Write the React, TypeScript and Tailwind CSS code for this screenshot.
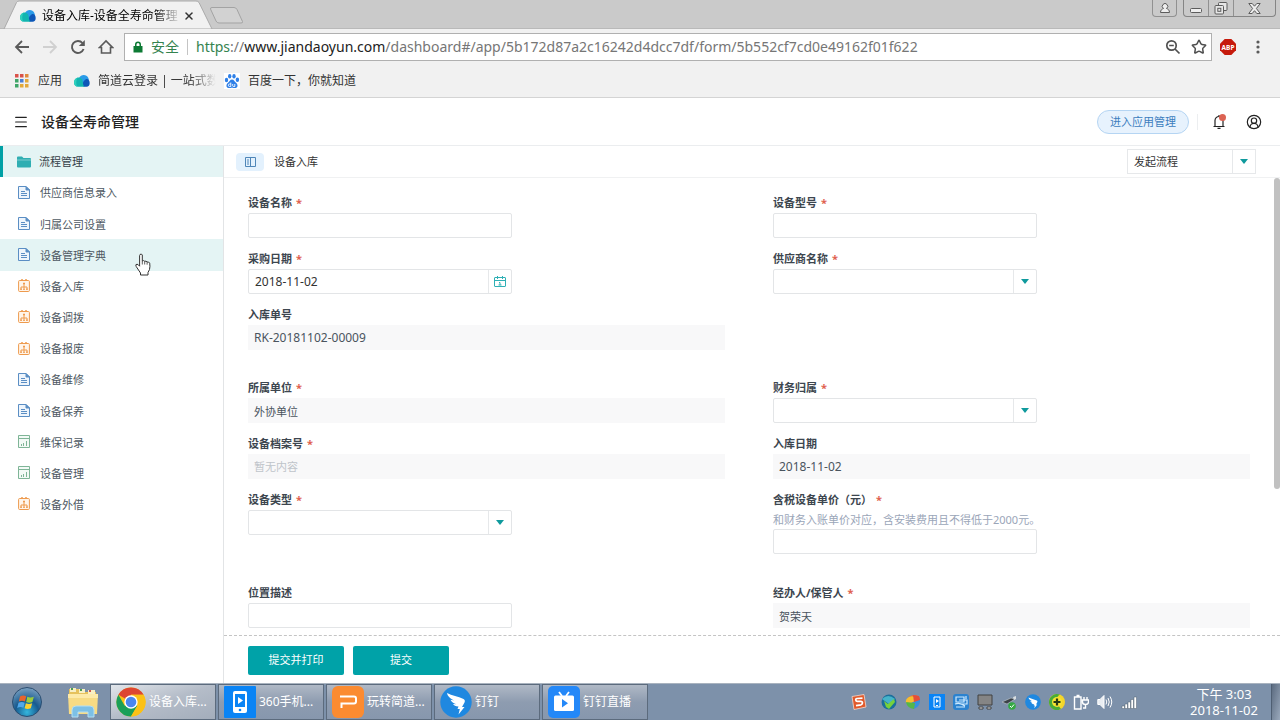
import { useId, type ReactNode } from "react";
import clsx from "clsx";
import { CircleUserRound, Menu, Star, X } from "lucide-react";

type MenuKind = "form" | "flow" | "report";

const menuItems: { name: string; kind: MenuKind; hovered?: boolean }[] = [
  { name: "供应商信息录入", kind: "form" },
  { name: "归属公司设置", kind: "form" },
  { name: "设备管理字典", kind: "form", hovered: true },
  { name: "设备入库", kind: "flow" },
  { name: "设备调拨", kind: "flow" },
  { name: "设备报废", kind: "flow" },
  { name: "设备维修", kind: "form" },
  { name: "设备保养", kind: "form" },
  { name: "维保记录", kind: "report" },
  { name: "设备管理", kind: "report" },
  { name: "设备外借", kind: "flow" },
];

function CloudLogo() {
  return (
    <svg viewBox="0 0 16 12" className="h-3 w-4 shrink-0">
      <path d="M5 3C6 1 8 0 10 .1c2.800.2 4.700 2.200 4.800 4.900L10 11.500 5 8Z" fill="#2a9be8" />
      <path d="M9.500 11.800C8 9 9 6 11.500 4.500c1.200-.6 2.200-.6 3.300.5 1.800 2.800.8 6.800-2.300 6.800Z" fill="#0d57b8" />
      <path
        d="M4 11.800C1.500 11.800 0 10 0 7.500 0 5 1.600 3.200 3.800 2.600 6 2 8 3.500 8.500 5.500c.5 2.300.2 4.500 2 6.300Z"
        fill="#12b5b0"
      />
      <path d="M3 11.600C1 11 0 9.500 0 7.500 0 5 1.600 3.200 3.800 2.600 1.800 5 2 9 3 11.600Z" fill="#2ed0bd" />
    </svg>
  );
}

function BaiduLogo() {
  return (
    <svg viewBox="0 0 16 16" className="size-4 shrink-0 bg-white" fill="#2f80e8">
      <ellipse cx="2.500" cy="7" rx="1.700" ry="2.200" />
      <ellipse cx="5.700" cy="3.200" rx="1.700" ry="2.300" />
      <ellipse cx="10" cy="3.200" rx="1.700" ry="2.300" />
      <ellipse cx="13.400" cy="6.800" rx="1.700" ry="2.200" />
      <path d="M8 6.500c2 0 2.500 2 4 3.200 2.500 2 1.800 5.300-1 5.300-1.200 0-1.800-.3-3-.3s-1.800.3-3 .3c-2.800 0-3.500-3.300-1-5.300C5.500 8.500 6 6.500 8 6.500Z" />
      <path d="M6.800 9.500v4H5.600a1.200 1.200 0 0 1 0-2.500h1.200M8.700 11v1.700c0 .6.300.8.800.8h1.300V11" fill="none" stroke="#fff" strokeWidth=".9" />
    </svg>
  );
}

const appDots = [
  "#d9534a", "#d9534a", "#e08a3c",
  "#3fa568", "#4a7fd6", "#e3a93a",
  "#3fa568", "#e3a93a", "#e3a93a",
];

function AppsIcon() {
  return (
    <svg viewBox="0 0 14 14" className="size-3.5 shrink-0">
      {appDots.map((color, i) => (
        <rect key={i} x={(i % 3) * 5} y={Math.floor(i / 3) * 5} width="3.500" height="3.500" fill={color} />
      ))}
    </svg>
  );
}

function BrowserChrome() {
  return (
    <header className="shrink-0 border-b border-[#d4d4d4] bg-[#f1f1f1]">
      <div className="flex h-[29px] items-start justify-between border-b border-[#b9b9b9] bg-[#cacaca]">
        <div className="flex items-start">
          <div className="relative h-[29px] w-[214px]">
            <svg viewBox="0 0 214 29" className="absolute inset-0 h-full w-full">
              <path d="M4 29 16.500 2.500Q17.500 1 19 1H196Q198 1 199 2.500L212 29Z" fill="#f1f1f1" stroke="#aaa" />
            </svg>
            <div className="relative flex h-[29px] items-center pt-0.5 pl-5">
              <CloudLogo />
              <span className="ml-1.5 w-[140px] mask-r-from-80% text-xs whitespace-nowrap">
                设备入库-设备全寿命管理
              </span>
              <button aria-label="关闭标签页" className="ml-px">
                <X className="size-3 text-[#333]" strokeWidth={3} />
              </button>
            </div>
          </div>
          <button aria-label="新标签页" className="-ml-1 pt-[7px]">
            <svg viewBox="0 0 34 17" className="h-[17px] w-[34px]">
              <path d="M2 .5h22q2 0 3 2l5.500 12q.5 1.500-1.500 1.500H9q-2 0-3-2L.5 2Q.2.500 2 .5Z" fill="#d2d2d2" stroke="#a3a3a3" />
            </svg>
          </button>
        </div>
        <div className="flex gap-1.5 pr-1 text-[#5c5c5c]">
          <button aria-label="用户" className="flex h-[17px] w-[25px] items-center justify-center rounded-b border border-t-0 border-[#919191]">
            <svg viewBox="0 0 12 12" className="size-3" fill="#eee" stroke="currentColor">
              <path d="M1.500 10.500c0-2.500 1.500-3.500 3-4a2.700 2.700 0 1 1 3 0c1.500.5 3 1.500 3 4Z" />
            </svg>
          </button>
          <div className="flex h-[17px] rounded-b border border-t-0 border-[#858585]">
            <button aria-label="最小化" className="flex w-[25px] items-end justify-center border-r border-[#919191] pb-[3px]">
              <svg viewBox="0 0 12 5" className="h-[5px] w-3">
                <rect x=".5" y=".5" width="11" height="4" rx="1" fill="#eee" stroke="currentColor" />
              </svg>
            </button>
            <button aria-label="还原" className="flex w-[25px] items-center justify-center border-r border-[#919191]">
              <svg viewBox="0 0 14 13" className="h-[13px] w-3.5" fill="#e6e6e6" stroke="currentColor">
                <rect x="4.500" y=".5" width="8.500" height="8" rx="1" />
                <rect x="1" y="3.500" width="8.500" height="8.500" rx="1" />
                <rect x="3.800" y="6.300" width="3" height="3" />
              </svg>
            </button>
            <button aria-label="关闭" className="flex w-[41px] items-center justify-center">
              <svg viewBox="0 0 13 11" className="h-[11px] w-[13px]" fill="#eee" stroke="currentColor">
                <path d="M.8.5h3.400l2.300 2.700L8.800.5h3.400L8.400 5.500l3.800 5H8.800L6.500 7.700l-2.300 2.800H.8l3.800-5Z" />
              </svg>
            </button>
          </div>
        </div>
      </div>

      <div className="flex h-9 items-center pr-5 pl-3.5 text-[#5a5a5a]">
        <div className="flex items-center gap-3">
          <button aria-label="后退">
            <svg viewBox="0 0 16 16" className="size-4" fill="none" stroke="currentColor" strokeWidth="1.800">
              <path d="M15 8H2M8 2 2 8l6 6" />
            </svg>
          </button>
          <button aria-label="前进" className="text-[#d0d0d0]">
            <svg viewBox="0 0 16 16" className="size-4" fill="none" stroke="currentColor" strokeWidth="1.800">
              <path d="M1 8h13M8 2l6 6-6 6" />
            </svg>
          </button>
          <button aria-label="重新加载">
            <svg viewBox="0 0 16 16" className="size-4" fill="none" stroke="currentColor" strokeWidth="1.900">
              <path d="M13.600 10A6 6 0 1 1 12.500 4" />
              <path d="M14.800 1v6h-6Z" fill="currentColor" stroke="none" />
            </svg>
          </button>
          <button aria-label="主页">
            <svg viewBox="0 0 16 16" className="size-4" fill="none" stroke="currentColor" strokeWidth="1.600">
              <path d="M1.500 8.500 8 2l6.500 6.500H12.500V14h-9V8.500Z" />
            </svg>
          </button>
        </div>
        <div className="ml-2.5 flex h-7 flex-1 items-center border border-[#b0b0b0] bg-white px-2 text-sm">
          <svg viewBox="0 0 10 12" className="h-3 w-2.5 shrink-0" fill="#0d7a34">
            <path d="M.5 5H2V3.500a3 3 0 0 1 6 0V5h1.500v6.500h-9ZM3.500 5h3V3.500a1.500 1.500 0 0 0-3 0Z" />
          </svg>
          <span className="ml-2 border-r border-[#c4c4c4] pr-2 leading-4 whitespace-nowrap text-[#35834f]">安全</span>
          <span className="ml-2 flex-1 whitespace-nowrap text-[#767676]">
            <span className="text-[#35834f]">https</span>://
            <span className="text-[#222]">www.jiandaoyun.com</span>
            /dashboard#/app/5b172d87a2c16242d4dcc7df/form/5b552cf7cd0e49162f01f622
          </span>
          <button aria-label="缩放" className="mr-2.5">
            <svg viewBox="0 0 16 16" className="size-4" fill="none" stroke="#505050" strokeWidth="1.700">
              <circle cx="6.500" cy="6.500" r="4.700" />
              <path d="m10 10 4.500 4.500M4.200 6.500h4.600" />
            </svg>
          </button>
          <button aria-label="收藏" className="-mr-1">
            <Star className="size-4 text-[#505050]" strokeWidth={2.3} />
          </button>
        </div>
        <button aria-label="广告拦截" className="ml-2">
          <svg viewBox="0 0 16 16" className="size-4">
            <path d="M4.700 0h6.600L16 4.700v6.600L11.300 16H4.700L0 11.300V4.700Z" fill="#c61a0c" />
            <text x="8" y="10.500" textAnchor="middle" fontSize="6.500" fontWeight="bold" fill="#fff">ABP</text>
          </svg>
        </button>
        <button aria-label="更多" className="ml-5">
          <svg viewBox="0 0 4 14" className="h-3.5 w-1" fill="currentColor">
            <circle cx="2" cy="2" r="1.600" />
            <circle cx="2" cy="7" r="1.600" />
            <circle cx="2" cy="12" r="1.600" />
          </svg>
        </button>
      </div>

      <nav className="flex h-8 items-center pl-[15px] text-xs text-[#333]">
        <a href="#apps" className="flex items-center gap-[9px]">
          <AppsIcon />
          应用
        </a>
        <a href="#login" className="ml-3 flex items-center gap-2">
          <CloudLogo />
          <span className="w-[124px] mask-r-from-75% mask-r-to-95% whitespace-nowrap">简道云登录 | 一站式数</span>
        </a>
        <a href="#baidu" className="ml-0.5 flex items-center gap-2">
          <BaiduLogo />
          百度一下，你就知道
        </a>
      </nav>
    </header>
  );
}

function MenuIcon({ kind }: { kind: MenuKind }) {
  if (kind === "form") {
    return (
      <svg viewBox="0 0 12 14" className="h-3.5 w-3 shrink-0" fill="#eef5fc" stroke="#5b8ec4">
        <path d="M.5.500H8L11.500 4v8.500H.5Z" />
        <path d="M8 .5V4h3.500Z" fill="#5b8ec4" />
        <path d="M3 5.500h4M3 7.500h6M3 9.500h6" />
      </svg>
    );
  }
  if (kind === "flow") {
    return (
      <svg viewBox="0 0 12 14" className="h-3.5 w-3 shrink-0" fill="#fff5ea" stroke="#ee9a4d">
        <rect x=".6" y="1.500" width="10.800" height="11" rx="1" />
        <path d="M3 1h2M7 1h2" strokeWidth="1.500" />
        <path d="M6 4v5.500M3 10.500V8h6v2.500" />
        <path d="M5 4.500h2M2.300 10.200h1.500M5.200 10.200h1.600M8.200 10.200h1.500" strokeWidth="1.600" />
      </svg>
    );
  }
  return (
    <svg viewBox="0 0 12 14" className="h-3.5 w-3 shrink-0" fill="#f3faf6" stroke="#7fb597">
      <path d="M.5.500h11v12H.5ZM.5 3.500h11" />
      <path d="M3.500 11V9M5.500 11V8M8.500 11V6" />
    </svg>
  );
}

function Sidebar() {
  return (
    <aside className="w-56 shrink-0 border-r border-[#e2e4e6] text-[11px] text-[#4e5963]">
      <ul className="grid h-[374px] auto-rows-fr">
        <li>
          <a href="#group" className="flex h-full items-center gap-2 border-l-3 border-[#00a0a5] bg-[#e4f4f4] pl-3.5 text-[#353f48]">
            <svg viewBox="0 0 14 12" className="h-3 w-3.5" fill="#2faeb2">
              <path d="M0 1.500Q0 .5 1 .5h4L6.500 2H13q1 0 1 1v7.500q0 1-1 1H1q-1 0-1-1Z" />
              <path d="M0 4h14" stroke="#8fd3d4" strokeWidth=".8" />
            </svg>
            <span className="pt-0.5">流程管理</span>
          </a>
        </li>
        {menuItems.map((item) => (
          <li key={item.name}>
            <a
              href={`#${item.name}`}
              className={clsx("flex h-full items-center gap-2.5 pl-[18px]", item.hovered && "bg-[#e4f4f4]")}
            >
              <MenuIcon kind={item.kind} />
              <span className="pt-0.5">{item.name}</span>
            </a>
          </li>
        ))}
      </ul>
    </aside>
  );
}

function Caret() {
  return (
    <span className="pointer-events-none flex w-[23px] shrink-0 items-center justify-center border-l border-[#e6e8ea]">
      <svg viewBox="0 0 8 5" className="h-[5px] w-2" fill="#0f9a9d">
        <path d="M0 0h8L4 5Z" />
      </svg>
    </span>
  );
}

type FieldProps = {
  label: string;
  type?: "text" | "date" | "select" | "readonly";
  value?: string;
  required?: boolean;
  hint?: string;
  placeholder?: string;
};

function Field({ label, type = "text", value = "", required, hint, placeholder }: FieldProps) {
  const id = useId();
  const box = "flex h-[25px] w-66 max-w-full rounded-xs border border-[#e3e5e7] bg-white";
  let control: ReactNode;

  if (type === "readonly") {
    control = (
      <input
        id={id}
        readOnly
        defaultValue={value}
        placeholder={placeholder}
        className={clsx(
          "block h-[25px] w-full bg-[#f8f8f9] px-1.5 text-[#4a545e] outline-none placeholder:text-[#bfc4ca]",
          /^[\w-]+$/.test(value) ? "text-xs" : "text-[11px]",
        )}
      />
    );
  } else if (type === "select") {
    control = (
      <div className={box}>
        <select id={id} className="min-w-0 flex-1 appearance-none px-1.5 outline-none">
          <option></option>
        </select>
        <Caret />
      </div>
    );
  } else if (type === "date") {
    control = (
      <div className={box}>
        <input id={id} defaultValue={value} className="min-w-0 flex-1 px-1.5 text-xs text-[#333] outline-none" />
        <button aria-label="选择日期" className="flex w-[23px] items-center justify-center border-l border-[#e6e8ea]">
          <svg viewBox="0 0 12 12" className="size-3" fill="none" stroke="#2fb0b5">
            <rect x=".5" y="1.500" width="11" height="9" rx=".5" />
            <path d="M.5 4.500h11M3.500 0v3M8.500 0v3M5 6.500h1V9M4.500 9h3" />
          </svg>
        </button>
      </div>
    );
  } else {
    control = <input id={id} defaultValue={value} className={clsx(box, "px-1.5 text-xs outline-none")} />;
  }

  return (
    <div>
      <label htmlFor={id} className="block text-[11px] leading-[21px] font-bold text-[#3d464f]">
        {label}
        {required && <span className="ml-1 text-[#e0604f]">*</span>}
      </label>
      {hint && <p className="text-[11px] leading-[19px] whitespace-nowrap text-[#9aa5b8]">{hint}</p>}
      {control}
    </div>
  );
}

function FieldRow({ children }: { children: ReactNode }) {
  return <div className="grid grid-cols-2 gap-12">{children}</div>;
}

function EntryForm() {
  return (
    <main className="flex min-w-0 flex-1 flex-col">
      <div className="flex h-8 shrink-0 items-center border-b border-[#f0f1f2] pr-6 pl-3 text-[11px] text-[#333]">
        <button aria-label="收起菜单" className="flex h-[18px] w-7 items-center justify-center rounded bg-[#e3f1fd]">
          <svg viewBox="0 0 11 10" className="h-2.5 w-[11px]" fill="none" stroke="#4f86b8">
            <path d="M.5.500h10v9H.5ZM5.500.500v9M2 3h2M2 5h2M2 7h2" />
          </svg>
        </button>
        <h2 className="ml-2.5 pt-0.5">设备入库</h2>
        <div className="ml-auto flex h-[25px] w-[129px] border border-[#e6e8ea]">
          <select aria-label="流程" className="min-w-0 flex-1 appearance-none px-1.5 pt-0.5 outline-none">
            <option>发起流程</option>
          </select>
          <Caret />
        </div>
      </div>

      <form className="flex min-h-0 flex-1 flex-col" onSubmit={(e) => e.preventDefault()}>
        <div className="flex min-h-0 flex-1">
          <div className="flex-1 overflow-hidden px-6 pt-3.5">
            <div className="space-y-2.5">
              <FieldRow>
                <Field label="设备名称" required />
                <Field label="设备型号" required />
              </FieldRow>
              <FieldRow>
                <Field label="采购日期" type="date" value="2018-11-02" required />
                <Field label="供应商名称" type="select" required />
              </FieldRow>
              <FieldRow>
                <Field label="入库单号" type="readonly" value="RK-20181102-00009" />
              </FieldRow>
            </div>
            <div className="mt-[27px] space-y-2.5">
              <FieldRow>
                <Field label="所属单位" type="readonly" value="外协单位" required />
                <Field label="财务归属" type="select" required />
              </FieldRow>
              <FieldRow>
                <Field label="设备档案号" type="readonly" placeholder="暂无内容" required />
                <Field label="入库日期" type="readonly" value="2018-11-02" />
              </FieldRow>
              <FieldRow>
                <Field label="设备类型" type="select" required />
                <Field label="含税设备单价（元）" hint="和财务入账单价对应，含安装费用且不得低于2000元。" required />
              </FieldRow>
            </div>
            <div className="mt-7">
              <FieldRow>
                <Field label="位置描述" />
                <Field label="经办人/保管人" type="readonly" value="贺荣天" required />
              </FieldRow>
            </div>
          </div>
          <div className="w-1.5 shrink-0">
            <div className="h-[68%] rounded-full bg-[#c1c1c1]" />
          </div>
        </div>
        <div className="flex h-12 shrink-0 items-center gap-[9px] border-t border-dashed border-[#c4c4c4] pt-0.5 pl-6 text-[11px] text-white">
          <button className="h-[29px] w-24 rounded-xs bg-[#00a2a8]">提交并打印</button>
          <button className="h-[29px] w-24 rounded-xs bg-[#00a2a8]">提交</button>
        </div>
      </form>
    </main>
  );
}

function ChromeIcon() {
  return (
    <svg viewBox="0 0 30 30" className="size-[30px]">
      <circle cx="15" cy="15" r="14.500" fill="#fbc116" />
      <path d="M15 15 2.400 7.700A14.500 14.500 0 0 1 27.600 7.700H15Z" fill="#dd4632" />
      <path d="M2.400 7.700A14.500 14.500 0 0 0 15 29.500L21.300 18.700 15 15 8.700 18.700Z" fill="#1a9f58" />
      <path d="M27.600 7.700H15L21.300 18.700 15 29.500A14.500 14.500 0 0 0 27.600 7.700Z" fill="#fbc116" />
      <circle cx="15" cy="15" r="6.700" fill="#fff" />
      <circle cx="15" cy="15" r="5.300" fill="#4a86ee" />
    </svg>
  );
}

function PhoneIcon() {
  return (
    <svg viewBox="0 0 32 32" className="size-8">
      <rect width="32" height="32" rx="1" fill="#0a84f5" />
      <rect x="9" y="5" width="14" height="22" rx="2" fill="#fff" />
      <path d="M11 8h10v13H11Z" fill="#0a84f5" />
      <path d="m14 11 5 3.500-5 3.500Z" fill="#fff" />
      <circle cx="16" cy="24" r="1.300" fill="#0a84f5" />
    </svg>
  );
}

function PresentationIcon() {
  return (
    <svg viewBox="0 0 32 32" className="size-8">
      <rect width="32" height="32" rx="6" fill="#fb8b31" />
      <path d="M8 10.500h14q2 0 2 2v3q0 2-2 2H9.500V22" fill="none" stroke="#fff" strokeWidth="2" />
    </svg>
  );
}

function DingIcon({ className }: { className: string }) {
  return (
    <svg viewBox="0 0 32 32" className={className}>
      <circle cx="16" cy="16" r="15.700" fill="#1f88e0" />
      <path
        d="M7 7c5 2.500 11 3.500 16.500 6 1.500.8 1.700 2 1 3.500L22 21h2.500l-6 7.500 1.300-5.500h-2.300l1-2.500c-3 0-4.500-1-5.500-2.500l3.500.3c-3-.8-5-2.300-6-4.500l4 .8C11 13 7.500 10.500 7 7Z"
        fill="#fff"
      />
    </svg>
  );
}

function LiveIcon() {
  return (
    <svg viewBox="0 0 32 32" className="size-8">
      <rect width="32" height="32" rx="5" fill="#2488f8" />
      <path d="m11 6 3 4M21 6l-3 4" stroke="#fff" strokeWidth="1.800" />
      <rect x="6" y="9.500" width="20" height="15.500" rx="1.500" fill="#fff" />
      <path d="m14 13 6 4.200-6 4.300Z" fill="#2488f8" />
    </svg>
  );
}

function StartOrb() {
  return (
    <svg viewBox="0 0 30 30" className="size-[30px]">
      <defs>
        <radialGradient id="orb" cx=".5" cy=".85" r=".9">
          <stop offset="0" stopColor="#35b6dd" />
          <stop offset=".45" stopColor="#175a8f" />
          <stop offset="1" stopColor="#86a9c7" />
        </radialGradient>
      </defs>
      <circle cx="15" cy="15" r="14.500" fill="url(#orb)" stroke="#2b4d70" />
      <path d="M8 9.500q3-1.800 6.200-.2L13 14.500Q10 13 6.800 14.600Z" fill="#e8642c" />
      <path d="M15.300 9.800q3.200 1.600 6.500 0l-1.400 5.200q-3.200 1.600-6.200 0Z" fill="#9ccc3c" />
      <path d="M6.500 15.700q3.200-1.500 6.200 0l-1.300 5q-3-1.500-6.200.2Z" fill="#52a8ea" />
      <path d="M13.900 16.200q3 1.600 6.300 0l-1.400 5q-3.200 1.600-6.200 0Z" fill="#fcd02f" />
    </svg>
  );
}

function FolderIcon() {
  return (
    <svg viewBox="0 0 34 32" className="h-8 w-[34px]">
      <path d="M3 3h10l2 3h15v20H3Z" fill="#e6c25d" />
      <path d="M4 2h6v4H4ZM13 3h6v4h-6ZM22 4h7v4h-7Z" fill="#f8efc4" />
      <path d="M5 2h2v2H5ZM14 3h2v2h-2Z" fill="#4d9b53" />
      <path d="M23 4h2v2h-2Z" fill="#d2584a" />
      <path d="M2 8h30l-1 20H3Z" fill="#f7db84" />
      <path d="M2 8h30v4H2Z" fill="#fdeaa9" />
      <path d="M6 31v-7q0-4 4-4h14q4 0 4 4v7h-6v-5H12v5Z" fill="#7cc0e6" stroke="#b4dff4" />
    </svg>
  );
}

const tasks = [
  { name: "设备入库...", icon: <ChromeIcon />, active: true },
  { name: "360手机...", icon: <PhoneIcon /> },
  { name: "玩转简道...", icon: <PresentationIcon /> },
  { name: "钉钉", icon: <DingIcon className="size-8" /> },
  { name: "钉钉直播", icon: <LiveIcon /> },
];

function Tray() {
  const size = "size-4";
  return (
    <div className="flex items-center gap-2">
      <svg viewBox="0 0 16 16" className="mr-1.5 size-4">
        <path d="m1 2.500 12-2L15 13 3 15.500Z" fill="#e0592b" stroke="#f7d9cb" strokeWidth=".8" />
        <path d="M11.500 4.200 6 4.500q-1.500.3-1.200 1.700.2 1.200 1.500 1.200l3.700-.1q1.500.1 1.500 1.500 0 1.500-1.500 2l-5 .9" fill="none" stroke="#fff" strokeWidth="1.700" />
      </svg>
      <svg viewBox="0 0 16 16" className={size}>
        <circle cx="8" cy="8" r="7.500" fill="#1b6f9b" />
        <path d="M1 5q6-6 13 0L8 10Z" fill="#45b3c9" />
        <path d="m3 7 4 3 6-5 1 3-6 7-3-2Z" fill="#76d13c" />
      </svg>
      <svg viewBox="0 0 16 16" className={size}>
        <path d="M1 8Q2 2 9 1q5 0 6 4L8 9Z" fill="#ef6a32" />
        <path d="M1 9Q0 5 4 3q5-2 8 2L7 9Z" fill="#f6be30" />
        <path d="M15 5q1 7-6 10L6 9Z" fill="#3790df" />
        <path d="M1 8q1 6 8 7l1-6Z" fill="#54b748" />
        <path d="m8 1 6 1 1 4-6 2Z" fill="#e54e3b" />
      </svg>
      <svg viewBox="0 0 16 16" className={size}>
        <path d="M0 0h16v16H0Z" fill="#0a84f5" />
        <path d="M5 3h6v10H5Z" fill="none" stroke="#fff" />
        <path d="m7 5 3 2-3 2ZM7 11h2v1H7Z" fill="#fff" />
      </svg>
      <svg viewBox="0 0 16 16" className={size}>
        <rect width="16" height="16" rx="3" fill="#2b82cf" />
        <path d="M3 3h8v5H3ZM6 6h8v4H8M2 10q5-2 10 2M3 13h9M13 2v3" fill="none" stroke="#cdeaff" strokeWidth="1.200" />
      </svg>
      <svg viewBox="0 0 16 16" className={size}>
        <path d="M1 1h14v10H1Z" fill="#858585" stroke="#404040" />
        <path d="M2 13h4v2H2ZM10 13h4v2h-4Z" fill="#e3e3e3" stroke="#404040" />
      </svg>
      <svg viewBox="0 0 16 16" className={size}>
        <path d="m1 8 9-4 4 1-8 5Z" fill="#3c4247" stroke="#c5cbd0" strokeWidth=".6" />
        <path d="m12 3 3-1v3l-2 1Z" fill="#d7dde0" />
        <circle cx="11" cy="12" r="3.800" fill="#34a944" />
        <path d="m9 12 1.500 1.500L13 10.500" fill="none" stroke="#fff" />
      </svg>
      <DingIcon className={size} />
      <svg viewBox="0 0 16 16" className={size}>
        <circle cx="8" cy="8" r="8" fill="#f5d62a" />
        <path d="M0 8a8 8 0 0 1 11-7.400Q4 5 12 15A8 8 0 0 1 0 8Z" fill="#48ac38" />
        <circle cx="8" cy="8" r="5" fill="#f7e432" />
        <path d="M8 4.500v7M4.500 8h7" stroke="#263b16" strokeWidth="2.200" />
      </svg>
      <svg viewBox="0 0 16 16" className={size} fill="none" stroke="#fff" strokeWidth="1.400">
        <path d="M1.500 3h6.500v12H1.500ZM3.500 1.500h3M11 3v3M14 3v3M9.500 6h6v2q0 2.500-3 2.500t-3-2.500ZM12.500 10v4H10" />
      </svg>
      <svg viewBox="0 0 16 16" className={size} fill="none" stroke="#fff">
        <path d="M.8 5.500H3L7 1.500v13L3 10.500H.8Z" fill="#e9edf2" />
        <path d="M9 5.500q1.500 2.500 0 5M11 4q2.500 4 0 8M13 2.500q3.500 5.500 0 11" />
      </svg>
      <svg viewBox="0 0 16 16" className={size} fill="#fff" stroke="#53606f" strokeWidth=".5">
        <path d="M1 12h2.500v2.500H1ZM4 10h2.500v4.500H4ZM7 8h2.500v6.500H7ZM10 5.500h2.500v9H10ZM13 3h2.500v11.500H13Z" />
      </svg>
    </div>
  );
}

function Taskbar() {
  return (
    <footer className="flex h-[37px] shrink-0 items-center border-t border-[#a9b3bf] bg-[#7d91aa] text-white">
      <button aria-label="开始" className="ml-3">
        <StartOrb />
      </button>
      <button aria-label="资源管理器" className="ml-6">
        <FolderIcon />
      </button>
      <div className="ml-2.5 flex h-full gap-0.5">
        {tasks.map((task) => (
          <button
            key={task.name}
            className={clsx(
              "flex h-full w-[106px] items-center gap-[3px] overflow-hidden border border-[#5c6b7d] px-[5px] text-xs whitespace-nowrap",
              task.active
                ? "bg-linear-to-br from-[#e1e5ea] via-[#b4bcc8] to-[#a3adbb]"
                : "bg-linear-to-b from-[#b0b9c6] via-[#8e9cb0] to-[#8797ad]",
            )}
          >
            <span className="shrink-0">{task.icon}</span>
            {task.name}
          </button>
        ))}
      </div>
      <div className="ml-auto flex h-full items-center">
        <Tray />
        <div className="ml-13 w-[70px] text-center text-[13px] leading-4">
          <div>下午 3:03</div>
          <div>2018-11-02</div>
        </div>
        <div className="ml-3 h-full w-[9px] border-l border-[#4f5f73] bg-linear-to-br from-[#5b6b80] to-[#9aa9bc]" />
      </div>
    </footer>
  );
}

function HandCursor() {
  return (
    <svg viewBox="0 0 16 23" className="pointer-events-none absolute top-[253px] left-[135px] h-[23px] w-4">
      <path
        d="M5 1.500q1.500-1.200 2.300.5V8q1.500-1 2.400.3 1.500-.7 2.300.7 1.800-.6 2.700 1.200.6 3-.2 6.300L13 19.500V22H5.500v-2L1.200 13.500q-1.200-2.200.8-2.300 1.200.1 2.600 2V2.500Z"
        fill="#fff"
        stroke="#333"
      />
      <path d="M7.300 8v3.500M9.700 8.500v3M12.100 9.200v2.500" stroke="#333" strokeWidth=".8" />
    </svg>
  );
}

export default function App() {
  return (
    <div className="relative flex h-screen flex-col overflow-hidden bg-white font-['Noto_Sans','Noto_Sans_CJK_SC',sans-serif]">
      <BrowserChrome />
      <div className="flex h-12 shrink-0 items-center border-b border-[#ebedef] pr-[18px] pl-[13px] text-[#222]">
        <button aria-label="菜单">
          <Menu className="size-4" strokeWidth={1.8} />
        </button>
        <h1 className="ml-3 text-sm font-medium">设备全寿命管理</h1>
        <button className="ml-auto h-6 w-[92px] rounded-full border border-[#b5d5f3] bg-[#e7f2fd] pt-0.5 text-[11px] text-[#3b7dbd]">
          进入应用管理
        </button>
        <div className="ml-2 h-4 border-l border-[#eceef0]" />
        <button aria-label="通知" className="relative ml-3.5">
          <svg viewBox="0 0 14 14" className="size-3.5" fill="none" stroke="currentColor" strokeWidth="1.200">
            <path d="M3 11V5.500a4 4 0 0 1 8 0V11M1.500 11.500h11M7 0v1.500M5.500 13.400h3" />
          </svg>
          <span className="absolute -top-px right-0 size-[7px] rounded-full bg-[#dc6353]" />
        </button>
        <button aria-label="个人中心" className="ml-5">
          <CircleUserRound className="size-4" strokeWidth={1.8} />
        </button>
      </div>
      <div className="flex min-h-0 flex-1">
        <Sidebar />
        <EntryForm />
      </div>
      <Taskbar />
      <HandCursor />
    </div>
  );
}
